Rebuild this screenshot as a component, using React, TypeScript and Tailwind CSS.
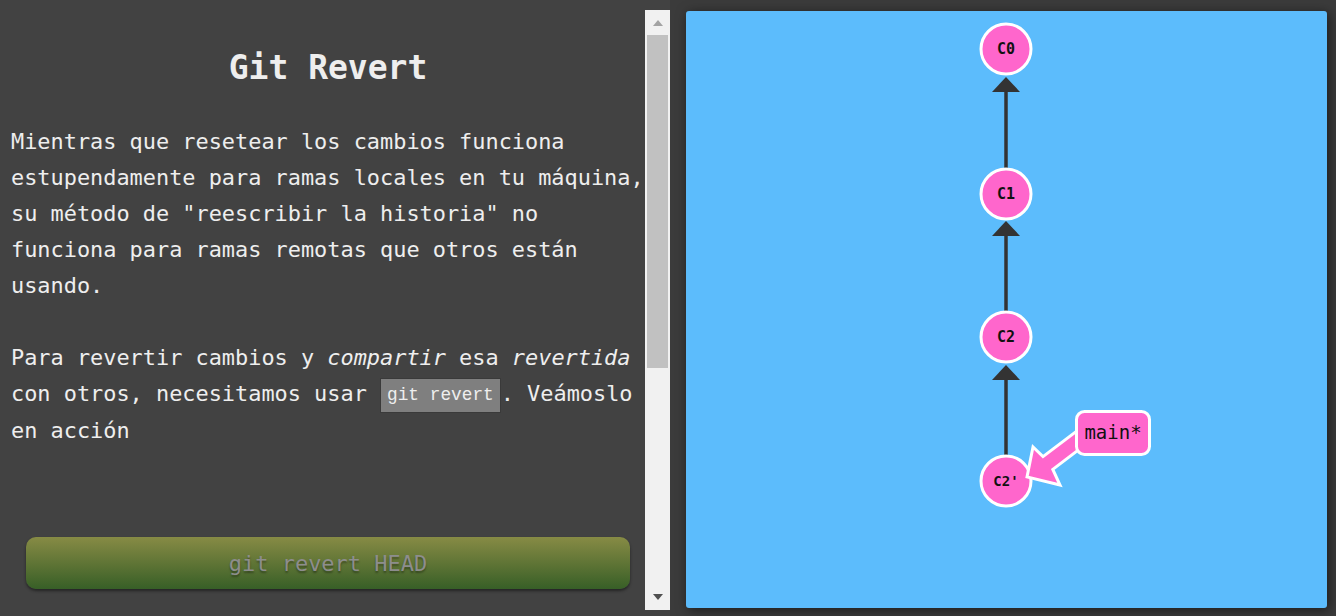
const mono = "font-['DejaVu_Sans_Mono','Liberation_Mono',monospace]";

function Node({ x, y, label, small }: { x: number; y: number; label: string; small?: boolean }) {
  return (
    <g>
      <circle cx={x} cy={y} r={25} fill="#ff66cc" stroke="#ffffff" strokeWidth={3} />
      <text
        x={x}
        y={y + 5}
        textAnchor="middle"
        fontFamily="DejaVu Sans Mono, monospace"
        fontWeight="bold"
        fontSize={small ? 14 : 15}
        fill="#111"
      >
        {label}
      </text>
    </g>
  );
}

function Edge({ x, from, to }: { x: number; from: number; to: number }) {
  // line from lower node top up to the arrow head under the upper node
  return (
    <g>
      <line x1={x} y1={from} x2={x} y2={to + 12} stroke="#333" strokeWidth={3.5} />
      <polygon points={`${x},${to} ${x - 14},${to + 15} ${x + 14},${to + 15}`} fill="#333" />
    </g>
  );
}

function Graph() {
  const cx = 320;
  return (
    <svg width="641" height="597" viewBox="0 0 641 597" className="block">
      <Edge x={cx} from={158} to={66} />
      <Edge x={cx} from={302} to={210} />
      <Edge x={cx} from={445} to={354} />
      <Node x={cx} y={38} label="C0" />
      <Node x={cx} y={183} label="C1" />
      <Node x={cx} y={326} label="C2" />
      <Node x={cx} y={470} label="C2'" small />
      {/* branch arrow */}
      <polygon
        points="341,466 347,436 357,445.6 401,412.3 410.5,425.1 366.8,458.4 374,474"
        fill="#ff66cc"
        stroke="#ffffff"
        strokeWidth={3}
        strokeLinejoin="miter"
      />
      <rect x={390.5} y={400.5} width={73} height={43} rx={8} fill="#ff66cc" stroke="#ffffff" strokeWidth={3} />
      <text x={427} y={428} textAnchor="middle" fontFamily="DejaVu Sans Mono, monospace" fontSize={19} fill="#111">
        main*
      </text>
    </svg>
  );
}

function Scrollbar() {
  return (
    <div className="mt-[10px] flex h-[600px] w-[25px] flex-col items-center bg-[#f1f1f1]">
      <div className="mt-[10px] h-0 w-0 border-x-[5.5px] border-b-[6px] border-x-transparent border-b-[#a3a3a3]" />
      <div className="mt-[9px] h-[333px] w-[21px] bg-[#c1c1c1]" />
      <div className="mt-auto mb-[10px] h-0 w-0 border-x-[5.5px] border-t-[6px] border-x-transparent border-t-[#505050]" />
    </div>
  );
}

export default function App() {
  return (
    <div className="flex h-[616px] w-[1336px] overflow-hidden bg-[#424242]">
      <div className={`flex h-full w-[645px] flex-col pl-[11px] text-[#eeeeee] ${mono}`}>
        <h1 className="mt-[48px] text-center text-[33px] leading-[40px] font-bold">Git Revert</h1>
        <p className="mt-[36px] text-[21.9px] leading-[36px]">
          Mientras que resetear los cambios funciona estupendamente para ramas locales en tu máquina, su método de
          "reescribir la historia" no funciona para ramas remotas que otros están usando.
        </p>
        <p className="mt-[36px] text-[21.9px] leading-[36px]">
          Para revertir cambios y <em>compartir</em> esa <em>revertida</em> con otros, necesitamos usar{" "}
          <code className="inline-block border border-[#3a3a3a] bg-[#7f7f7f] px-[6px] align-middle text-[17.8px] leading-[33px] text-[#eeeeee]">
            git revert
          </code>
          . Veámoslo en acción
        </p>
        <button className="mx-[15px] mt-auto mb-[27px] h-[52px] rounded-[10px] bg-gradient-to-b from-[#878b45] to-[#375f27] text-[22px] text-[#8d8d8d] shadow-[0_2px_3px_rgba(0,0,0,0.45)] [text-shadow:0_2px_2px_rgba(0,0,0,0.35)]">
          git revert HEAD
        </button>
      </div>
      <Scrollbar />
      <div className="flex-1 bg-[#3b3b3b] pt-[11px] pl-[16px]">
        <div className="h-[597px] w-[641px] overflow-hidden rounded-[3px] bg-[#5cbcfc] shadow-[2px_2px_12px_rgba(0,0,0,0.55)]">
          <Graph />
        </div>
      </div>
    </div>
  );
}
